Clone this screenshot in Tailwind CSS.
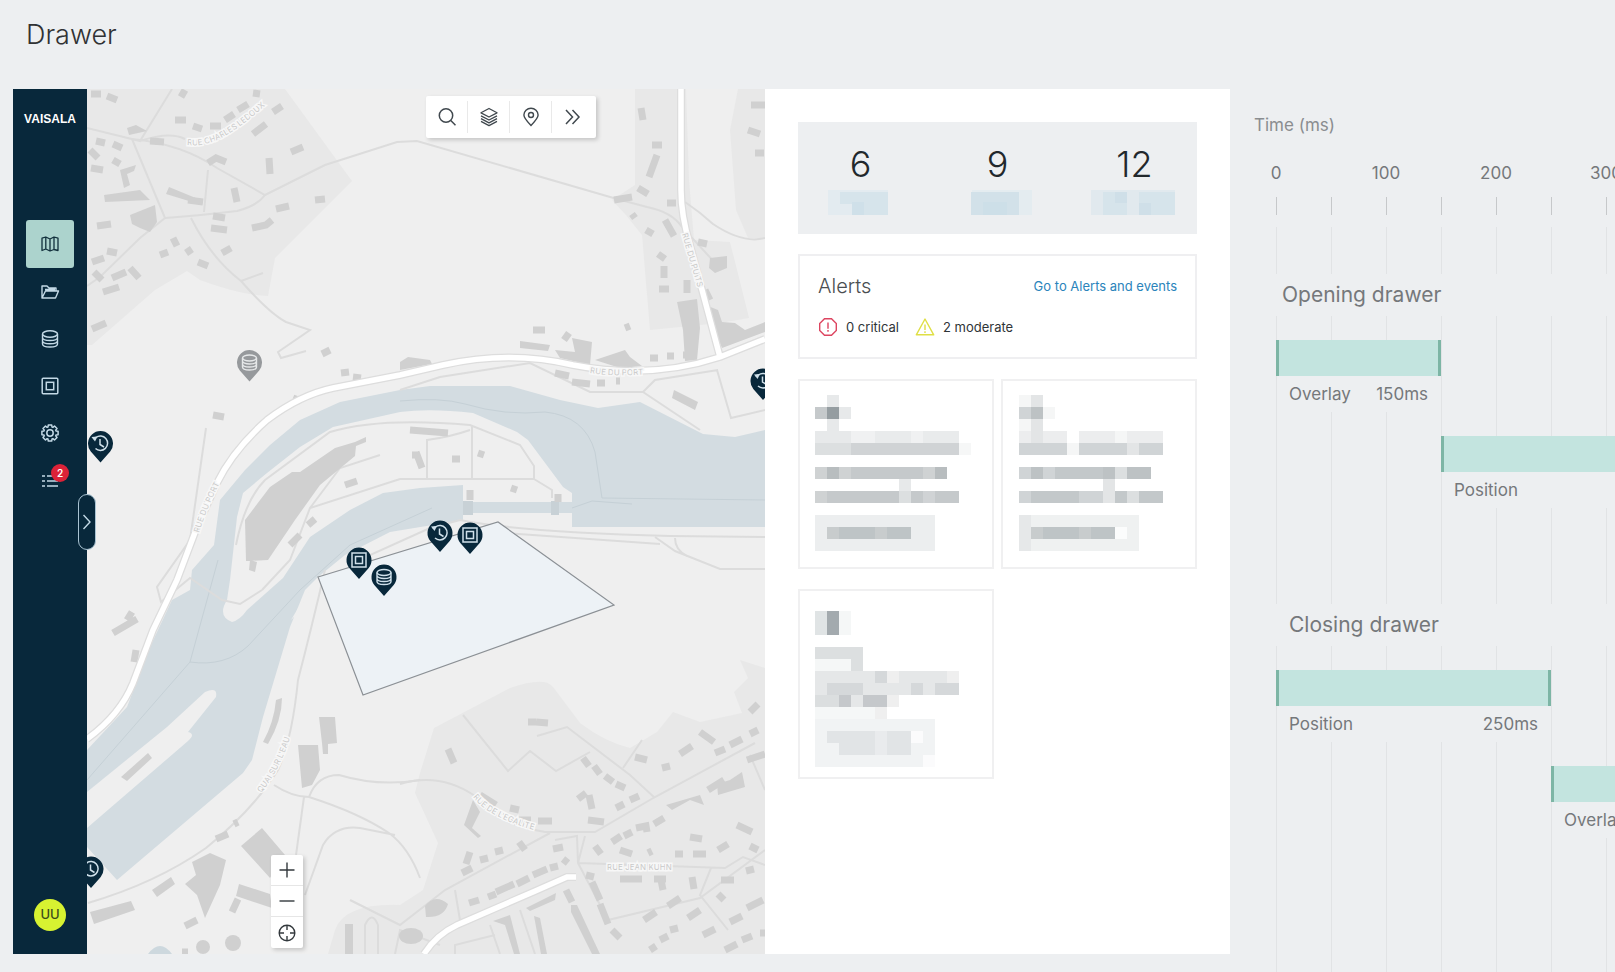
<!DOCTYPE html>
<html lang="en">
<head>
  <meta charset="UTF-8">
  <meta name="viewport" content="width=device-width, initial-scale=1.0">
  <title>Drawer</title>
  <script src="https://cdn.jsdelivr.net/npm/@tailwindcss/browser@4"></script>
</head>
<body class="flex min-h-screen flex-col overflow-x-hidden bg-[#edeff1] font-['Inter','Liberation_Sans',sans-serif] text-[#75787b]">
  <header class="px-[26px] pt-[15px] pb-[34px]">
    <h1 class="text-[27px] leading-10 font-light text-[#303234]">Drawer</h1>
  </header>

  <main class="flex grow">
    <section class="relative mb-[18px] ml-[13px] flex min-w-0 flex-1">
      <!-- Sidebar -->
      <nav class="z-10 flex w-[74px] shrink-0 flex-col items-center bg-[#08283b] pt-5 pb-[23px] text-[#c3d9e6]">
        <div class="font-['Liberation_Sans_Narrow','Liberation_Sans',sans-serif] text-[12px] leading-5 font-bold text-white">VAISALA</div>
        <ul class="mt-[91px] flex flex-col">
          <li>
            <button type="button" aria-label="Map" class="flex size-12 items-center justify-center rounded-[3px] bg-[#acd3cd] text-[#12303c]">
              <svg class="size-5" viewBox="0 0 20 20" fill="none" stroke="currentColor" stroke-width="1.3" stroke-linejoin="round"><path d="M2 4.2 5.800 3l4.200 2 4-2 4 1.200v12.300L14 15.500 10 17l-4.200-2L2 16.500zM5.800 3v12M10 5v12M14 3v12.500"/></svg>
            </button>
          </li>
          <li>
            <button type="button" aria-label="Folders" class="flex h-[47px] w-12 items-center justify-center">
              <svg class="size-5" viewBox="0 0 20 20" fill="none" stroke="currentColor" stroke-width="1.4" stroke-linejoin="round"><path d="M2 16V4h5l2 2h7v3M2 16h13.500l3-7H5.500zM5 7.500h10"/></svg>
            </button>
          </li>
          <li>
            <button type="button" aria-label="Data" class="flex h-[47px] w-12 items-center justify-center">
              <svg class="size-5" viewBox="0 0 20 20" fill="none" stroke="currentColor" stroke-width="1.4"><ellipse cx="10" cy="5" rx="7.500" ry="3.200"/><path d="M2.500 5v10c0 1.800 3.400 3 7.500 3s7.500-1.200 7.500-3V5M2.500 8.500c0 1.800 3.400 3 7.500 3s7.500-1.200 7.500-3M2.500 11.800c0 1.800 3.400 3 7.500 3s7.500-1.200 7.500-3"/></svg>
            </button>
          </li>
          <li>
            <button type="button" aria-label="Units" class="flex h-[47px] w-12 items-center justify-center">
              <svg class="size-5" viewBox="0 0 20 20" fill="none" stroke="currentColor" stroke-width="1.5"><rect x="2.200" y="2.200" width="15.600" height="15.600" rx="1"/><rect x="6.300" y="6.300" width="7.400" height="7.400"/></svg>
            </button>
          </li>
          <li>
            <button type="button" aria-label="Settings" class="flex h-12 w-12 items-center justify-center">
              <svg class="size-5" viewBox="0 0 20 20" fill="none" stroke="currentColor" stroke-width="1.5" stroke-linejoin="round"><path d="M8 4 8.300 1.900 11.700 1.900 12 4 12.900 4.300 14.500 3 17 5.500 15.700 7.100 16 8 18.100 8.300 18.100 11.700 16 12 15.700 12.900 17 14.500 14.500 17 12.900 15.700 12 16 11.700 18.100 8.300 18.100 8 16 7.100 15.700 5.500 17 3 14.500 4.300 12.900 4 12 1.900 11.700 1.900 8.300 4 8 4.300 7.100 3 5.500 5.500 3 7.100 4.300z"/><circle cx="10" cy="10" r="3.200"/></svg>
            </button>
          </li>
          <li>
            <button type="button" aria-label="Events, 2 new" class="relative flex h-[47px] w-12 items-center justify-center">
              <svg class="size-5" viewBox="0 0 20 20" fill="none" stroke="currentColor" stroke-width="1.400"><path d="M2 5h3M7 5h11M2 10h3M7 10h11M2 15h3M7 15h11"/></svg>
              <span class="absolute top-[7px] right-[5px] flex size-[18px] items-center justify-center rounded-full bg-[#dc2238] text-[10px] font-semibold text-white">2</span>
            </button>
          </li>
        </ul>
        <button type="button" class="mt-auto size-8 rounded-full bg-[#d7f231] text-[13px] font-medium text-[#3c4c1c]">UU</button>
      </nav>

      <button type="button" aria-label="Expand menu" class="absolute top-1/2 left-[65px] z-20 flex h-14 w-[18px] -translate-y-1/2 items-center justify-center rounded-full border border-[#a9c3d2] bg-[#08283b] text-[#c3d9e6]">
        <svg class="h-4 w-2 shrink-0" viewBox="0 0 8 16" fill="none" stroke="currentColor" stroke-width="1.400"><path d="m.5 1 6.500 7-6.500 7"/></svg>
      </button>

      <!-- Map -->
      <div class="relative min-w-0 flex-1 overflow-hidden bg-[#efefef]">
        <svg class="absolute inset-0 size-full" viewBox="87 89 678 865" preserveAspectRatio="xMinYMin slice" fill="none">
          <defs>
            <path id="pin" d="M0 19-9.700 8A12.500 12.500 0 1 1 9.700 8z"/>
            <g id="pin-history"><use href="#pin" fill="#08283b"/><path d="M-4.500-6A7.200 7.200 0 1 1-5 5M-7.500-5l3-1M-.5-4.500V1l4 2.500" stroke="#cfe0ea" stroke-width="1.500"/><path d="M-9-6.500l6-.5-2.500 5z" fill="#cfe0ea"/></g>
            <g id="pin-unit"><use href="#pin" fill="#08283b"/><path d="M-7-7H7V7H-7zM-3.500-3.500h7v7h-7z" stroke="#cfe0ea" stroke-width="1.500"/></g>
            <g id="db" stroke-width="1.400"><ellipse cy="-4.500" rx="7" ry="3"/><path d="M-7-4.500V4.500C-7 6.300-4 7.500 0 7.500S7 6.300 7 4.500V-4.500M-7-1.500C-7 .3-4 1.500 0 1.500S7 .3 7-1.500M-7 1.500C-7 3.300-4 4.500 0 4.500S7 3.300 7 1.500"/></g>
            <path id="road-charles" d="M187 145q18 2 36-8 22-12 56-44"/>
            <path id="road-north" d="M682 234 706 316"/>
            <path id="road-port" d="M590 373q24 4 62 1"/>
            <path id="road-quai" d="M261 793q20-24 31-62"/>
            <path id="road-west" d="M199 533q7-24 24-56"/>
            <path id="road-hauts" d="M473 797q16 22 72 36"/>
            <path id="road-jean" d="M607 870h82"/>
          </defs>

          <!-- Built-up areas -->
          <g fill="#e8e8e8">
            <path d="M87 89H285L352 181 275 258 268 296Q240 295 200 280L187 271 155 290 92 345H87z"/>
            <path d="M635 89H686L689 180 694 240 730 242 749 318 720 323 650 330 642 235 626 215 612 200 635 185z"/>
            <path d="M738 89H765V238H748L736 210 730 130z"/>
            <path d="M434 728 510 688Q545 676 553 687L580 723Q605 742 630 748L657 732 673 712 700 722 742 713 734 692 748 678 740 660 765 668V954H328L335 930Q345 903 400 905L423 890 438 843 415 793 420 773z"/>
          </g>

          <!-- River -->
          <path fill="#d3dce1" d="M765 430 735 437 703 434 640 402 598 408 560 400 510 386H430L400 390 340 402 300 420 270 445 245 470 220 500 214 545 192 570 190 590 172 600 150 647 127 707 87 750V847L117 880 243 773 252 760 263 717 290 627 305 590 318 577 345 555 390 532 463 520V513H572V527H765z"/>
          <path fill="#efefef" d="M572 493 563 487 528 440 517 432 473 413Q430 408 400 412L333 427 300 447 267 473 243 493 237 517 230 580 227 600Q217 616 232 622 240 620 247 610L283 578 310 537 350 510 383 493 420 488 463 485V502H572zM87 792 167 727 205 692Q218 686 216 697L188 732Q196 734 188 741L87 828zM291 620 294 617 292 640 300 642 304 600 312 585z"/>
          <path fill="#c8d1d6" d="M463 501h10v14h-10zM551 501h8v14h-8z"/>
          <path stroke="#c5d0d6" d="M218 560 190 662 87 780M190 662q35 5 58-16L300 590 350 545 432 508M400 401q40-4 65 3 40 12 80 8 40 4 50 40l7 46 163 2M572 508l20-7 40 3"/>

          <!-- Minor roads -->
          <g stroke="#dcdcdc" stroke-width="2">
            <path d="M87 128 140 141 172 89M140 141q30-10 45-2M132 139 165 218M132 139q50 5 85 29l48 27 60-30 72-23 20-1 200 58 30 8q25 5 35 20l35 38"/>
            <path d="M208 170 204 212M165 218q30-2 72-7 20-5 28-16M191 218q20 40 50 63l22-8M241 281q28 32 45 41l24 8-32 22 3 6 25-7"/>
            <path d="M165 218 140 238 100 277 87 286M206 428 190 540 157 587 161 602 190 578 222 600 240 604 262 590M685 202q15 10 28 22 30 20 52 14"/>
            <path d="M325 570q-14 60-27 110-6 60-20 90-25 40-72 78-50 35-118 55M274 785q18 12 35 12 8-22 30-22 40 12 81 5M309 797q50 16 80 36 20 15 31 45M304 797 296 855M305 895 323 845Q335 825 360 828L395 835"/>
            <path d="M236 545Q245 500 265 480L330 432Q380 417 470 425L520 445 534 466V479H400L310 508 290 560 262 590M310 508 340 468 380 455M472 425V479M427 478V440Q450 437 470 430M534 479 552 490V498"/>
            <path d="M328 600 370 555 430 528 460 520q60 12 210 16l95 1M460 530 660 544M655 537 675 551 720 569H765M675 538q0 12 12 18M400 390 440 377 530 363 590 392H643L655 380 718 370M717 370 731 418 765 410M643 392 700 430"/>
            <path d="M400 784q40-12 75 12M475 797q15 25 70 35h50l60-35 100-54M463 715 508 771 530 751 556 771 590 752M537 736 567 727 630 775 655 798M623 768 642 740M550 833 445 890 400 925 350 900M555 840 577 836 578 863 608 920 700 898 765 850M578 863 725 868 743 857 765 865M711 868 700 895 728 930M578 863 585 836M455 890 460 920M490 925 500 954M520 910 535 954M455 954V945L495 935M365 954V925Q372 910 378 925V954M395 954 400 930 440 945M750 755 765 790"/>
          </g>

          <!-- Buildings, large -->
          <g fill="#d0d0d0">
            <path d="M355 442 366 437V442L356 446 355 456 320 485 295 520 268 560 246 561 245 520 270 487 292 472 300 472 335 448zM250 560 257 562 255 572 249 570z"/>
            <path d="M298 745H318L320 770 312 785 302 788zM319 717H335L337 743 328 744V754H323L322 743zM241 846 262 828 285 855 270 878zM192 862 210 853 226 860 220 885 205 918 197 895 185 884 196 875zM239 884 270 894 272 908 236 896zM276 700 282 698Q282 720 268 744L263 742Q274 722 276 700zM121 777 148 753 152 758 127 781zM90 912 131 901 135 910 94 924zM152 890 171 877 175 884 157 897z"/>
            <path d="M677 302 697 299 700 328 697 360 685 361 683 330zM708 306 718 310 722 322 735 323 745 330 765 322 765 332 722 348 713 328zM710 258 727 256V268L715 273 709 268zM674 390 698 402 695 410 672 398zM400 362 408 357 430 360 432 364 400 370zM520 341 550 345 548 351 520 348z"/>
            <path d="M555 350 575 352 572 338 592 342 590 365 560 358zM595 360 625 350 630 357 642 366 620 368zM104 195 140 190 150 200 105 202zM120 170 136 165 134 171 127 174 130 185 124 188zM130 215 155 205 157 222 150 232 140 228 132 224zM127 128 136 125 147 131 129 135zM169 187 203 201 202 205 166 194z"/>
            <path d="M571 905 577 905 600 954H592L571 912zM493 921 510 915 520 954H514L505 925zM534 916 540 918 547 954H541zM425 906Q435 893 448 904 444 918 426 917zM526 908 556 893 555 900 530 911zM464 825 473 800 480 812 472 828 481 836 478 838zM730 780 742 772 745 787 718 795 717 784zM666 805 700 795 704 805 690 800 672 810z"/>
            <ellipse cx="411" cy="936" rx="12" ry="8"/><ellipse cx="233" cy="943" rx="8" ry="8"/><circle cx="203" cy="947" r="7"/><path d="M345 924h8v30h-8z"/>
          </g>
          <path fill="#cdd8de" d="M148 954q12-16 24 0z"/>

          <!-- Buildings, small -->
          <g stroke="#d0d0d0" stroke-width="7">
            <path d="M91 94h10M107 96l10 4M181 97l4-7M175 120h11M193 126l9 3M210 126h11M225 120l9-6M238 110l10-6M253 134l13-10M273 112l9-6M253 93l7 1M291 152l12-5M269 158l1 16M208 163l8-5 10 4M234 188l3 14M96 141l9 2M113 144l9 4M113 160l7 4M90 150l8 8M91 168l12 2M150 141l14 1M188 200l15 2M315 200l10-1M276 209l13-3M252 228l14-3 6-5M213 216l12 2M211 228l16 2M222 253l9-5M198 262l10 4M160 255l8-3M173 238l4 8M187 248l4 6M97 226l14-2M107 251l10 2M92 262l12-4M94 272l8 8M112 278l14-6M103 292l16-5M130 268l9 10M92 329l14-6"/>
            <path d="M213 415l11 2M293 398l8 3M322 354l8-4M341 373l8-1M353 377l8 1M641 108l2 12M652 145h10M657 155l-8 22M638 188l10 6M614 200l18-3M667 203h9M665 220l9 16M632 214l3 4M646 230l7 4M658 254l7 5M664 266v12M659 289h10M687 280v13M698 242l9 2M705 290l5 10M751 105h14M748 130l12 4M755 153h9M533 330h12M564 340l5-7M625 328l5-2M650 358h8M667 356h7M683 355h8M555 373l14 3M572 382l18 2M597 383h8M616 381h4"/>
            <path d="M410 430l38 3M416 452l6 16M452 459h8M478 453l6 2M511 488l6 2M470 490v10M558 494v8M412 455h5M345 485l12-4M290 545l10-10M308 525l7-6M113 633l24-14M127 620l5-8M134 662l2-12M216 839l12-5M234 824l4-2M232 912l6-13M185 926l12-6M182 952h6"/>
            <path d="M448 749l6 14M528 722h8M536 722l12 1M583 758l6 8M594 766l6 8M605 776l8 6M616 784l9 4M480 795l16 10M510 808l9 2M519 820h12M538 821h14M589 795l3 14M578 799l8-6M588 820l16 2M616 808l8-4M630 800l9-4M519 842l6 8M462 873l10-5M480 860l8-2M495 852l8-2M553 849l10-2M470 852l-4 12M595 846l6 8M612 842l9-6M624 836l8-4M636 828l10-2 1 6M654 824l10-6M620 850l12 4M648 853l4-2M675 854h8M693 854h13M690 837l12 2M718 850l10-6M737 825l15 7M750 846l8 4M746 871l8-2M469 903l10-3M488 897l8-3M496 892l18-8M517 884l12-6M533 875l14-6M550 868l8-2M563 859l5 4M566 890l6 12M620 879h22M654 879h12M661 880l2 10M692 877l2 12M721 880h13M586 875l8 2M592 882l8 18M600 904l8 20M612 930l8 8M668 906l12-8M644 920l12-8M688 918l12-8M703 935l12-6M718 894l6 6M730 922l12-6M747 908l16-8M725 950l12-6M742 940l10-4M760 933h5M670 930l8-2M660 940l8-4M650 950l6-4M635 757l12 3M680 754l12-8M662 768l8-2M700 732l14 10M715 753l10-4M730 745l12-6M750 734l8-4M750 712l8-8M747 760l18-6M708 790l16-10"/>
          </g>

          <!-- Main roads -->
          <g stroke="#dddddd" stroke-width="8">
            <path d="M87 739Q120 715 133 683L153 630 177 580 197 527 217 483Q233 450 267 420 300 395 333 388L400 375 443 365Q510 350 573 365 650 380 720 357L765 339M681 89V190Q681 215 690 245L720 357M424 954Q436 935 457 925L533 892 567 877 576 877"/>
          </g>
          <g stroke="#ffffff" stroke-width="5.500">
            <path d="M87 739Q120 715 133 683L153 630 177 580 197 527 217 483Q233 450 267 420 300 395 333 388L400 375 443 365Q510 350 573 365 650 380 720 357L765 339M681 89V190Q681 215 690 245L720 357M424 954Q436 935 457 925L533 892 567 877 576 877"/>
          </g>

          <!-- Street names -->
          <g fill="#c9c9c9" stroke="#f7f7f7" stroke-width="3" paint-order="stroke" class="text-[8px]">
            <text><textPath href="#road-charles">RUE CHARLES LEDOUX</textPath></text>
            <text><textPath href="#road-north">RUE DU PUITS</textPath></text>
            <text><textPath href="#road-port">RUE DU PORT</textPath></text>
            <text><textPath href="#road-quai">QUAI SUR L'EAU</textPath></text>
            <text><textPath href="#road-west">RUE DU PORT</textPath></text>
            <text><textPath href="#road-hauts">RUE DE L'EGALITE</textPath></text>
            <text><textPath href="#road-jean">RUE JEAN KUHN</textPath></text>
          </g>

          <path fill="#edf2f6" stroke="#8b9095" stroke-width="1.200" d="M318 577 498 522 614 605 363 695z"/>

          <use href="#pin" x="249.500" y="362.500" fill="#96999c"/>
          <use href="#db" x="249.500" y="362.500" stroke="#e6e8e9"/>
          <use href="#pin-history" x="100.500" y="443.500"/>
          <use href="#pin-history" x="440" y="533"/>
          <use href="#pin-unit" x="470" y="535"/>
          <use href="#pin-unit" x="359" y="560"/>
          <use href="#pin" x="384" y="577" fill="#08283b"/>
          <use href="#db" x="384" y="577" stroke="#cfe0ea"/>
          <use href="#pin-history" x="763" y="381"/>
          <use href="#pin-history" x="91" y="869"/>
        </svg>

        <div class="absolute top-[7px] left-1/2 flex rounded-[2px] bg-white py-[5px] pr-0.5 text-[#40484e] shadow-[2px_2px_4px_rgba(0,0,0,0.18)]">
          <button type="button" aria-label="Search" class="flex h-8 w-[42px] items-center justify-center border-r border-[#e9e9e9]">
            <svg class="size-5" viewBox="0 0 20 20" fill="none" stroke="currentColor" stroke-width="1.500"><circle cx="9" cy="8.500" r="6.700"/><path d="m13.800 13.500 4.700 4.700"/></svg>
          </button>
          <button type="button" aria-label="Layers" class="flex h-8 w-[42px] items-center justify-center border-r border-[#e9e9e9]">
            <svg class="size-5" viewBox="0 0 20 20" fill="none" stroke="currentColor" stroke-width="1.300" stroke-linejoin="round"><path d="m10 1.500 8 4.300-8 4.200-8-4.200zM2 8.800l8 4.200 8-4.200M2 11.600l8 4.200 8-4.200M2 14.400l8 4.200 8-4.200"/></svg>
          </button>
          <button type="button" aria-label="Places" class="flex h-8 w-[42px] items-center justify-center border-r border-[#e9e9e9]">
            <svg class="size-5" viewBox="0 0 20 20" fill="none" stroke="currentColor" stroke-width="1.400"><path d="M10 18.500C5.500 13.800 2.900 11 2.900 8a7.100 6.800 0 0 1 14.200 0c0 3-2.600 5.800-7.100 10.500z"/><circle cx="10" cy="8" r="2.500"/></svg>
          </button>
          <button type="button" aria-label="More tools" class="flex h-8 w-[42px] items-center justify-center">
            <svg class="size-5" viewBox="0 0 20 20" fill="none" stroke="currentColor" stroke-width="1.500"><path d="m3 3 6.500 7-6.500 7M9.500 3l6.500 7-6.500 7"/></svg>
          </button>
        </div>

        <div class="absolute bottom-1.5 left-[184px] flex w-8 flex-col rounded-[2px] bg-white text-[#33393d] shadow-[2px_2px_4px_rgba(0,0,0,0.18)]">
          <button type="button" aria-label="Zoom in" class="flex h-[31px] items-center justify-center border-b border-[#e6e6e6]">
            <svg class="size-5" viewBox="0 0 20 20" stroke="currentColor" stroke-width="1.400"><path d="M2.500 10h15M10 2.500v15"/></svg>
          </button>
          <button type="button" aria-label="Zoom out" class="flex h-[31px] items-center justify-center border-b border-[#e6e6e6]">
            <svg class="size-5" viewBox="0 0 20 20" stroke="currentColor" stroke-width="1.400"><path d="M2.500 10h15"/></svg>
          </button>
          <button type="button" aria-label="Centre map" class="flex h-[31px] items-center justify-center">
            <svg class="size-5" viewBox="0 0 20 20" fill="none" stroke="currentColor" stroke-width="1.400"><circle cx="10" cy="10" r="7.800"/><path d="M10 2v5M10 13v5M2 10h5M13 10h5"/></svg>
          </button>
        </div>
      </div>

      <!-- Drawer -->
      <aside class="flex w-[465px] shrink-0 flex-col gap-5 bg-white px-[33px] py-[33px]">
        <div class="h-28 bg-[#edeff1]">
          <dl class="-mx-1.5 grid grid-cols-3 pt-5 text-center">
            <div class="flex flex-col-reverse items-center gap-1">
              <dt aria-label="Sites">
                <svg class="h-[25px] w-[66px]" viewBox="0 0 66 25"><path fill="#e3ebf0" d="M0 0h60v25H0z"/><path fill="#d6e4eb" d="M12 2h48v23H24V14H12z"/><path fill="#cfe0e9" d="M24 12h12v13H24z"/></svg>
              </dt>
              <dd class="text-[36px] leading-[44px] font-light text-[#22282c]">6</dd>
            </div>
            <div class="flex flex-col-reverse items-center gap-1">
              <dt aria-label="Masks">
                <svg class="h-[25px] w-[68px]" viewBox="0 0 68 25"><path fill="#e4ecf0" d="M8 0h60v25H8z"/><path fill="#d2e1e9" d="M7 2h48v23H7z"/><path fill="#cddfe8" d="M19 12h24v13H19z"/></svg>
              </dt>
              <dd class="text-[36px] leading-[44px] font-light text-[#22282c]">9</dd>
            </div>
            <div class="flex flex-col-reverse items-center gap-1">
              <dt aria-label="Measurements">
                <svg class="h-[25px] w-[88px]" viewBox="0 0 88 25"><path fill="#e1e9ee" d="M0 0h84v25H0z"/><path fill="#d6e4eb" d="M12 2h24v23H12zM48 2h36v23H48z"/><path fill="#cfdfe8" d="M24 2h12v11H24zM48 13h12v12H48z"/></svg>
              </dt>
              <dd class="text-[36px] leading-[44px] font-light text-[#22282c]">12</dd>
            </div>
          </dl>
        </div>

        <div class="border-2 border-[#efeff1] px-[18px] pt-4 pb-5">
          <div class="flex items-center justify-between">
            <h2 class="text-[20px] leading-7 font-light text-[#4a4e51]">Alerts</h2>
            <a href="#" class="text-[13px] leading-5 text-[#2b84bb]">Go to Alerts and events</a>
          </div>
          <div class="mt-[17px] flex items-center text-[13px] leading-5 text-[#2f3437]">
            <svg class="mr-2 size-5" viewBox="0 0 20 20" fill="none" stroke="#dd4560" stroke-width="1.400"><path d="M6.500 1.700h7l4.800 4.800v7l-4.800 4.800h-7l-4.800-4.800v-7zM10 5.500v6.200M10 13v1.700"/></svg>
            <span class="mr-4">0 critical</span>
            <svg class="mr-2 size-5" viewBox="0 0 20 20" fill="none" stroke="#dfdf45" stroke-width="1.400" stroke-linejoin="round"><path d="m10 2 8.700 15.800H1.300zM10 7.500v5.500M10 14.300v1.600"/></svg>
            <span>2 moderate</span>
          </div>
        </div>

        <div class="grid grid-cols-2 gap-x-[7px] gap-y-5">
          <article class="h-[190px] border-2 border-[#f0f0f1] px-[15px] pt-[14px]">
            <svg class="h-[156px] w-[156px]" viewBox="0 0 156 156" shape-rendering="crispEdges">
              <path fill="#e7e9ea" d="M12 0h12v12H12zM12 24h12v12H12zM24 12h12v12H24zM0 36h36v12H0zM84 84h12v12H84z"/>
              <path fill="#f0f1f2" d="M36 36h72v12H36z"/><path fill="#e9ebec" d="M60 36h36v12H60zM108 36h36v12h-36z"/>
              <path fill="#dcdfe0" d="M0 48h36v12H0zM84 96h12v12H84z"/><path fill="#d0d3d5" d="M36 48h108v12H36zM108 96h12v12h-12z"/><path fill="#f6f7f7" d="M144 48h12v12h-12z"/>
              <path fill="#c5c9cb" d="M0 12h12v12H0zM0 72h132v12H0zM12 96h72v12H12zM96 96h12v12H96zM120 96h24v12h-24z"/>
              <path fill="#cfd2d3" d="M0 72h12v12H0zM24 72h12v12H24zM108 72h12v12h-12zM0 96h12v12H0z"/>
              <path fill="#b8bdbf" d="M12 72h12v12H12zM120 72h12v12h-12z"/><path fill="#959da1" d="M12 12h12v12H12z"/>
              <path fill="#eceeef" d="M0 120h120v36H0z"/><path fill="#c8cccd" d="M12 132h84v12H12z"/><path fill="#bec4c6" d="M24 132h36v12H24zM72 132h24v12H72z"/>
            </svg>
          </article>
          <article class="h-[190px] border-2 border-[#f0f0f1] px-4 pt-[14px]">
            <svg class="h-[156px] w-[156px]" viewBox="0 0 156 156" shape-rendering="crispEdges">
              <path fill="#f5f6f6" d="M0 0h12v12H0zM24 12h12v12H24zM0 24h12v12H0zM48 48h12v12H48zM96 36h12v12H96z"/>
              <path fill="#e3e5e6" d="M12 0h12v12H12zM12 24h12v24H12zM84 84h12v24H84zM108 48h12v12h-12z"/>
              <path fill="#ecedee" d="M0 36h12v12H0zM24 36h24v12H24zM60 36h36v12H60zM108 36h36v12h-36z"/>
              <path fill="#d0d4d6" d="M0 12h12v12H0zM0 48h48v12H0zM60 48h48v12H60zM120 48h24v12h-24zM0 72h108v12H0zM0 96h84v12H0z"/>
              <path fill="#c3c8ca" d="M36 72h48v12H36zM12 96h48v12H12zM96 96h12v12H96zM120 96h24v12h-24z"/>
              <path fill="#bdc2c4" d="M12 12h12v12H12zM12 72h12v12H12zM84 72h12v12H84zM108 72h24v12h-24z"/><path fill="#dcdfe0" d="M96 72h12v12H96zM108 96h12v12h-12z"/>
              <path fill="#eff1f1" d="M0 120h120v36H0z"/><path fill="#e6e8e9" d="M0 120h12v36H0z"/><path fill="#c8cccd" d="M12 132h84v12H12z"/><path fill="#bec4c6" d="M24 132h36v12H24zM72 132h24v12H72z"/><path fill="#fbfcfc" d="M96 132h12v12H96z"/>
            </svg>
          </article>
          <article class="h-[190px] border-2 border-[#f0f0f1] px-[15px] pt-5">
            <svg class="h-[156px] w-[156px]" viewBox="0 0 156 156" shape-rendering="crispEdges">
              <path fill="#e0e4e5" d="M0 0h12v24H0z"/><path fill="#a3aaae" d="M12 0h12v24H12z"/><path fill="#f5f7f7" d="M24 0h12v24H24zM0 48h36v12H0zM0 96h60v12H0z"/>
              <path fill="#dcdfe0" d="M0 36h48v12H0zM36 48h12v12H36z"/><path fill="#e5e7e8" d="M0 60h132v24H0zM0 84h72v12H0z"/><path fill="#efefef" d="M72 60h12v12H72zM132 60h12v12h-12zM72 84h12v12H72zM60 96h12v12H60z"/>
              <path fill="#d5d8da" d="M12 72h36v12H12zM96 72h12v12H96zM120 72h24v12h-24zM60 60h12v12H60z"/><path fill="#dbdedf" d="M0 84h24v12H0z"/><path fill="#c5c8cb" d="M24 84h12v12H24zM48 84h24v12H48z"/>
              <path fill="#f1f3f4" d="M0 108h120v48H0z"/><path fill="#e1e4e6" d="M12 120h12v12H12zM24 120h36v24H24zM72 120h24v24H72z"/><path fill="#e9ebed" d="M60 120h12v24H60z"/><path fill="#fbfbfc" d="M96 120h12v12H96zM108 144h12v12h-12z"/>
            </svg>
          </article>
        </div>
      </aside>
    </section>

    <!-- Timeline -->
    <section class="w-[385px] shrink-0 overflow-hidden text-[17px] leading-6">
      <div class="flex h-full w-[720px] flex-col">
        <p class="pt-6 pl-6 text-[#8a8d90]">Time (ms)</p>
        <div class="mt-6 -ml-[9px] flex text-center">
          <span class="w-[110px]">0</span><span class="w-[110px]">100</span><span class="w-[110px]">200</span><span class="w-[110px]">300</span>
        </div>
        <div class="mt-3 ml-[46px] h-[18px] bg-[repeating-linear-gradient(to_right,#c6c8ca_0px,#c6c8ca_1px,transparent_1px,transparent_55px)]"></div>
        <div class="mt-3 ml-[46px] flex-1 bg-[repeating-linear-gradient(to_right,#e1e3e5_0px,#e1e3e5_1px,transparent_1px,transparent_55px)] pt-[47px]">
          <h2 class="bg-[#edeff1] py-[6px] pl-[6px] text-[21px] leading-[30px]">Opening drawer</h2>
          <div class="mt-6 w-[165px]">
            <div class="h-9 border-x-[3px] border-[#7db5a5] bg-[#c3e4df]"></div>
            <div class="mx-px flex h-9 items-center justify-between bg-[#edeff1] px-3"><span>Overlay</span><span>150ms</span></div>
          </div>
          <div class="mt-6 ml-[165px] w-[275px]">
            <div class="h-9 border-x-[3px] border-[#7db5a5] bg-[#c3e4df]"></div>
            <div class="mx-px flex h-9 items-center justify-between bg-[#edeff1] px-3"><span>Position</span><span>250ms</span></div>
          </div>
          <h2 class="mt-24 bg-[#edeff1] py-[6px] pl-[13px] text-[21px] leading-[30px]">Closing drawer</h2>
          <div class="mt-6 w-[275px]">
            <div class="h-9 border-x-[3px] border-[#7db5a5] bg-[#c3e4df]"></div>
            <div class="mx-px flex h-9 items-center justify-between bg-[#edeff1] px-3"><span>Position</span><span>250ms</span></div>
          </div>
          <div class="mt-6 ml-[275px] w-[165px]">
            <div class="h-9 border-x-[3px] border-[#7db5a5] bg-[#c3e4df]"></div>
            <div class="mx-px flex h-9 items-center justify-between bg-[#edeff1] px-3"><span>Overlay</span><span>150ms</span></div>
          </div>
        </div>
      </div>
    </section>
  </main>
</body>
</html>
